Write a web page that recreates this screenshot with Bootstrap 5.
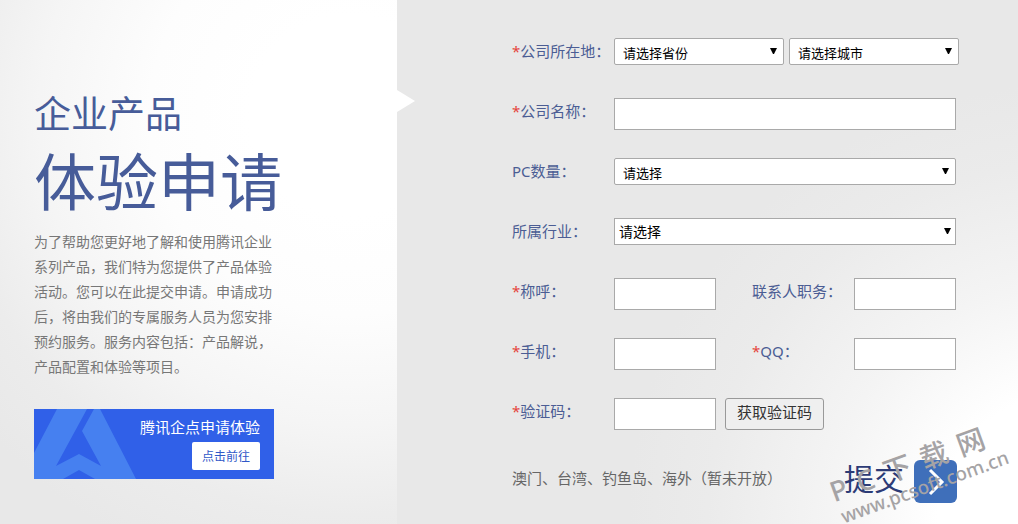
<!DOCTYPE html>
<html lang="zh-CN">
<head>
<meta charset="utf-8">
<meta name="viewport" content="width=device-width, initial-scale=1">
<title>企业产品体验申请</title>
<link href="https://cdn.jsdelivr.net/npm/bootstrap@5.3.0/dist/css/bootstrap.min.css" rel="stylesheet">
<style>
body{font-family:"Noto Sans","Noto Sans CJK SC",sans-serif;font-size:15px;line-height:26px;background:#e8e8e8;overflow-x:hidden}
.cjk,h1,p,select,button{font-family:"Noto Sans CJK SC",sans-serif}
.intro{flex:0 0 39%;padding:91px 34px 45px;background:radial-gradient(circle at 88% 22%,#fff 100px,#fdfdfd 200px,#f5f5f5 310px,#ececec 400px,#e8e8e8 480px)}
.pointer{top:90px;left:100%;width:18px;height:22px;background:#fff;clip-path:polygon(0 0,100% 50%,0 100%)}
h1{color:#475c99;font-weight:400}
.title-top{font-size:37px;line-height:42px}
.title-main{font-size:62px;line-height:68px;margin:12px 0 16px}
.desc{width:240px;font-size:14px;line-height:25px;color:#777;margin-bottom:30px}
.promo{width:240px;height:70px;padding:5px 14px 9px;background:#3060e8;color:#fff}
.promo svg{top:0;left:0}
.promo-go{width:68px;height:28px;border-radius:2px;font-size:12px;line-height:28px;color:#3058c8}
.apply{padding:38px 59px 20px 115px;background:radial-gradient(circle at 108% 100%,#fff 130px,#f4f4f4 240px,#ebebeb 360px,#e8e8e8 440px)}
.line{min-height:32px;margin-bottom:28px}
.line label{flex:0 0 102px;color:#4b5d94;white-space:nowrap}
.req{color:#e5443c}
.box{width:102px;height:32px;border:1px solid #a9a9a9;background:#fff;padding:0 6px}
.wide{width:342px}
.gap-pair{margin-left:36px}
.pick{appearance:none;height:27px;border:1px solid #a9a9a9;border-radius:2px;color:#000;font-size:13px;line-height:22px;padding:2px 20px 0 8px;background:#fff url("data:image/svg+xml,%3Csvg xmlns='http://www.w3.org/2000/svg' viewBox='0 0 7 7'%3E%3Cpath d='M0 0h7L4 6H3z'/%3E%3C/svg%3E") no-repeat right 6px top 9px/7px 7px}
.half{width:170px}
.next{margin-left:5px}
.flat{border-radius:0;font-size:14px;padding:0 20px 2px 4px;background-position:right 4px top 9px}
.code{width:99px;height:32px;margin-left:9px;border:1px solid #999;border-radius:3px;background:#efefef;color:#333;font-size:15px;line-height:26px;padding:0 0 4px}
.foot{width:445px;padding-top:2px}
.note{color:#666;margin-top:5px}
.send{border:0;background:none;padding:0;color:#2c3b76;font-size:30px;line-height:34px;gap:10px}
.mark-lay{right:5px;bottom:25px;width:184px;transform:rotate(-20deg);color:#a5a3a5;font-weight:500;pointer-events:none}
.mark-name{font-family:"Noto Sans","Noto Sans CJK SC",sans-serif;font-size:28px;line-height:30px;gap:11px}
.mark-url{font-size:19px;line-height:24px;padding-left:2px}
</style>
</head>
<body>
<main class="d-flex min-vh-100 position-relative">
  <section class="intro position-relative">
    <h1 class="mb-0"><span class="title-top d-block">企业产品</span><span class="title-main d-block text-nowrap">体验申请</span></h1>
    <p class="desc">为了帮助您更好地了解和使用腾讯企业系列产品，我们特为您提供了产品体验活动。您可以在此提交申请。申请成功后，将由我们的专属服务人员为您安排预约服务。服务内容包括：产品解说，产品配置和体验等项目。</p>
    <a href="#" class="promo d-flex flex-column align-items-end justify-content-between position-relative text-decoration-none cjk">
      <svg class="position-absolute" width="105" height="70" viewBox="0 0 105 70" aria-hidden="true"><path fill="#4680f0" d="M23 0h30L22 57l23-12 22 12L48 22 60 0h6l36 70H61L45 61 29 70H0V44z"/></svg>
      <span class="position-relative">腾讯企点申请体验</span>
      <span class="promo-go bg-white text-center position-relative">点击前往</span>
    </a>
    <div class="pointer position-absolute"></div>
  </section>
  <form class="apply flex-grow-1">
    <div class="line d-flex"><label for="province"><span class="req">*</span>公司所在地：</label>
      <select id="province" class="pick half"><option>请选择省份</option></select>
      <select aria-label="城市" class="pick half next"><option>请选择城市</option></select></div>
    <div class="line d-flex"><label for="company"><span class="req">*</span>公司名称：</label><input id="company" class="box wide"></div>
    <div class="line d-flex"><label for="count">PC数量：</label><select id="count" class="pick wide"><option>请选择</option></select></div>
    <div class="line d-flex"><label for="trade">所属行业：</label><select id="trade" class="pick wide flat"><option>请选择</option></select></div>
    <div class="line d-flex"><label for="person"><span class="req">*</span>称呼：</label><input id="person" class="box">
      <label for="job" class="gap-pair">联系人职务：</label><input id="job" class="box"></div>
    <div class="line d-flex"><label for="phone"><span class="req">*</span>手机：</label><input id="phone" type="tel" class="box">
      <label for="qq" class="gap-pair"><span class="req">*</span>QQ：</label><input id="qq" class="box"></div>
    <div class="line d-flex"><label for="code"><span class="req">*</span>验证码：</label><input id="code" class="box"><button type="button" class="code">获取验证码</button></div>
    <div class="foot d-flex justify-content-between align-items-start">
      <p class="note mb-0">澳门、台湾、钓鱼岛、海外（暂未开放）</p>
      <button type="submit" class="send d-flex align-items-start">提交<svg width="43" height="43" viewBox="0 0 43 43" aria-hidden="true"><rect width="43" height="43" rx="6" fill="#3f6fba"/><path d="M16 10l12 12-12 12" fill="none" stroke="#fff" stroke-width="3"/></svg></button>
    </div>
  </form>
  <div class="mark-lay position-absolute">
    <div class="mark-name d-flex"><span>P</span><span>C</span><span>下</span><span>载</span><span>网</span></div>
    <div class="mark-url">www.pcsoft.com.cn</div>
  </div>
</main>
<script src="https://cdn.jsdelivr.net/npm/bootstrap@5.3.0/dist/js/bootstrap.bundle.min.js"></script>
</body>
</html>
